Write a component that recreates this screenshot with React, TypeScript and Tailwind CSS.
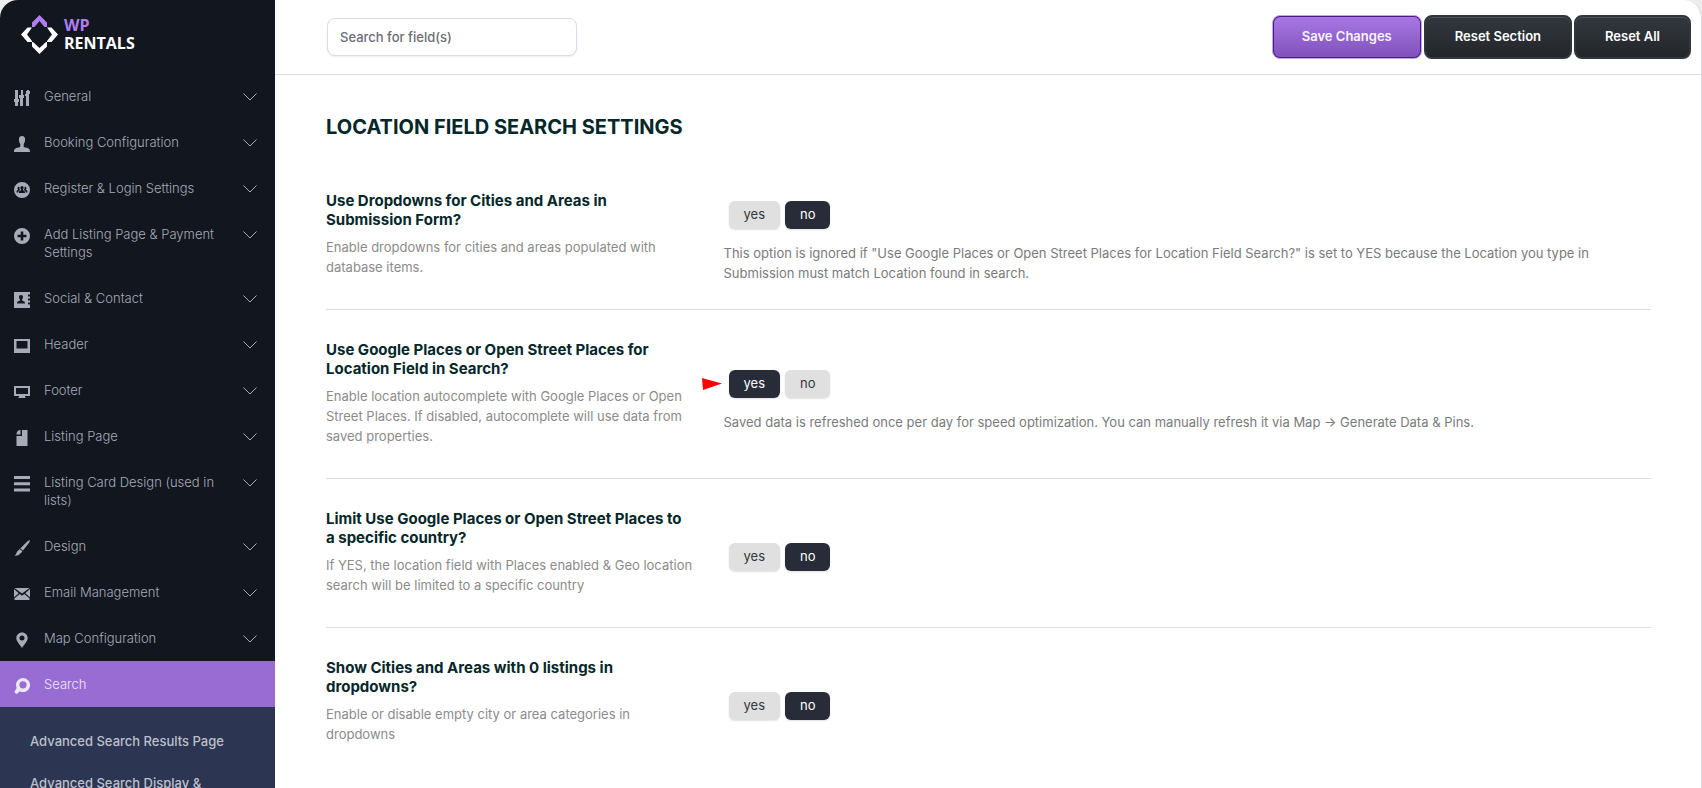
import { useState, type ReactNode } from "react"
import { clsx } from "clsx"

type MenuItem = {
  label: string
  icon: ReactNode
  active?: boolean
}

type Setting = {
  id: string
  title: string
  description: string
  note?: string
  value: "yes" | "no"
  marked?: boolean
}

const MENU: MenuItem[] = [
  {
    label: "General",
    icon: (
      <path d="M1 0h3v9h1v3H4v4H1v-4H0V9h1zM7 0h2v5h1v3h1V4h1V1h1V0h2v1h1v3h-1v12h-3V6h-1v2H9v8H6V8H5V5h2z" />
    ),
  },
  {
    label: "Booking Configuration",
    icon: (
      <path d="M8 0c2.200 0 3.100 1.300 3.100 3.600 0 1.900-.5 3.400-1.400 4.300v2c0 1 .6 1.300 2.100 1.700 2.700.7 4.200 1.300 4.200 4.400H0c0-3.100 1.500-3.700 4.200-4.400 1.500-.4 2.100-.7 2.100-1.700v-2c-.9-.9-1.400-2.400-1.400-4.300C4.900 1.300 5.800 0 8 0z" />
    ),
  },
  {
    label: "Register & Login Settings",
    icon: (
      <path
        fillRule="evenodd"
        d="M8 0a8 8 0 1 1 0 16A8 8 0 0 1 8 0zM8 4c-1.100 0-1.700.8-1.600 1.900 0 .7.3 1.200.7 1.600v.7C5.500 8.700 5 9 5 11h6c0-2-.5-2.300-2.100-2.800v-.7c.4-.4.7-.9.7-1.600C9.700 4.800 9.100 4 8 4zM4.800 4.800c-.9 0-1.300.6-1.300 1.400 0 .6.200 1 .5 1.300v.6C2.800 8.500 2.500 9 2.500 10.400h1.800c.1-1.200.6-1.900 1.700-2.400-.4-.7-.6-1.400-.5-2.900zM11.200 4.800l-.7.3c.1 1.500-.1 2.200-.5 2.900 1.100.5 1.600 1.200 1.700 2.400h1.800c0-1.400-.3-1.900-1.500-2.300v-.6c.3-.3.500-.7.500-1.300 0-.8-.4-1.400-1.300-1.400z"
      />
    ),
  },
  {
    label: "Add Listing Page & Payment Settings",
    icon: (
      <path
        fillRule="evenodd"
        d="M8 0a8 8 0 1 1 0 16A8 8 0 0 1 8 0zM6.700 3.500v3.200H3.500v2.600h3.200v3.200h2.600V9.300h3.200V6.700H9.300V3.500z"
      />
    ),
  },
  {
    label: "Social & Contact",
    icon: (
      <path
        fillRule="evenodd"
        d="M0 0h16v2.500h-2v2h2v2h-2v2h2v2h-2v2h2V16H0zM7 3C5.700 3 5 3.900 5 5.200c0 1 .4 1.800 1 2.400v.9C4 9.200 3 9.500 3 11.500h8c0-2-1-2.300-3-3v-.9c.6-.6 1-1.400 1-2.400C9 3.900 8.300 3 7 3z"
      />
    ),
  },
  {
    label: "Header",
    icon: <path fillRule="evenodd" d="M0 1h16v14H0zM2.500 3v7.500h11V3z" />,
  },
  {
    label: "Footer",
    icon: <path fillRule="evenodd" d="M0 2h16v10h-5v1l1 1H4l1-1v-1H0zM2 4v6h12V4z" />,
  },
  {
    label: "Listing Page",
    icon: <path d="M8 0h5.500v16h-11V6H8zM6.500 0v4.500h-4c0-2.500 1.500-4.500 4-4.500z" />,
  },
  {
    label: "Listing Card Design (used in lists)",
    icon: <path d="M0 0h16v3H0zM0 6.300h16v3H0zM0 12.500h16v3H0z" />,
  },
  {
    label: "Design",
    icon: (
      <path d="M15.700.3c.6.5-.4 2-1.400 3.400L9 10.500 6.300 8.400l6-6C13.600 1.100 15 0 15.700.3zM5.600 9l2.800 2.200c-.5 1.300-1.700 1.600-2.400 2.600C5 15.300 3 16 .5 15.700c1.500-.7 1.500-2.100 2.400-3.700C3.600 10.700 4.600 10.500 5.600 9z" />
    ),
  },
  {
    label: "Email Management",
    icon: (
      <path d="M.5 2h15L8 7.500zM0 3l4.700 4.200L0 11.200zM16 3v8.200l-4.700-4zM5.700 8 8 9.700 10.300 8l5.200 4.200V14H.5v-1.800z" />
    ),
  },
  {
    label: "Map Configuration",
    icon: (
      <path
        fillRule="evenodd"
        d="M8 .5c3.300 0 5.700 2.500 5.700 5.600C13.700 9.500 10.500 12 8 16 5.500 12 2.300 9.500 2.300 6.100 2.300 3 4.700.5 8 .5zM8 3.600a2.500 2.500 0 1 0 0 5 2.500 2.500 0 0 0 0-5z"
      />
    ),
  },
  {
    label: "Search",
    active: true,
    icon: (
      <path
        fillRule="evenodd"
        d="M9 0a7 7 0 1 1-3.200 13.200L4 15c-.6.600-1.300 1.200-2.300.6C.6 15 .1 14 .8 13.200L2.700 10A7 7 0 0 1 9 0zM9 3.200a3.600 3.600 0 1 0 0 7.200 3.600 3.600 0 0 0 0-7.200z"
      />
    ),
  },
]

const SUBMENU = ["Advanced Search Results Page", "Advanced Search Display &"]

const SETTINGS: Setting[] = [
  {
    id: "dropdowns",
    title: "Use Dropdowns for Cities and Areas in Submission Form?",
    description: "Enable dropdowns for cities and areas populated with database items.",
    note: 'This option is ignored if "Use Google Places or Open Street Places for Location Field Search?" is set to YES because the Location you type in Submission must match Location found in search.',
    value: "no",
  },
  {
    id: "places",
    title: "Use Google Places or Open Street Places for Location Field in Search?",
    description:
      "Enable location autocomplete with Google Places or Open Street Places. If disabled, autocomplete will use data from saved properties.",
    note: "Saved data is refreshed once per day for speed optimization. You can manually refresh it via Map → Generate Data & Pins.",
    value: "yes",
    marked: true,
  },
  {
    id: "limit-country",
    title: "Limit Use Google Places or Open Street Places to a specific country?",
    description:
      "If YES, the location field with Places enabled & Geo location search will be limited to a specific country",
    value: "no",
  },
  {
    id: "empty-areas",
    title: "Show Cities and Areas with 0 listings in dropdowns?",
    description: "Enable or disable empty city or area categories in dropdowns",
    value: "no",
  },
]

function Logo() {
  return (
    <a href="#" className="flex items-center gap-[6px] pt-[15px] pl-[21px]">
      <svg viewBox="0 0 37 39" className="h-[39px] w-[37px]" aria-hidden="true">
        <path fill="#b07df5" d="M18.500 0 26 7.500V12h-2.500l-5-6-5 6H11V7.500z" />
        <path fill="#fff" d="M11 12.500 6 19.500l5 6.500v1H6.500L0 19.500l6.500-7z" />
        <path fill="#fff" d="M26 12.500 31 19.500 26 26v1h4.500l6.500-7.500-6.500-7z" />
        <path fill="#fff" d="M18.500 39 26 31.500V27h-1l-6.500 6-6.500-6h-1v4.500z" />
      </svg>
      <span className="pb-px font-['Open_Sans',sans-serif] text-[16px] leading-[18px] font-bold text-white">
        <span className="block text-[#b07df5]">WP</span>
        <span className="block">RENTALS</span>
      </span>
    </a>
  )
}

function Sidebar() {
  return (
    <aside className="w-[275px] shrink-0 overflow-hidden bg-[#12161f]">
      <Logo />
      <nav className="mt-[19px]">
        {MENU.map((item) => (
          <a
            key={item.label}
            href="#"
            className={clsx(
              "flex items-start py-[14px] pr-[18px] pl-[14px] text-[13px] leading-[18px]",
              item.active ? "bg-[#996cd4] text-[#ece8f2]" : "text-[#a7abb8]"
            )}
          >
            <svg viewBox="0 0 16 16" className="mt-[3px] -mb-1 size-4 shrink-0 fill-current" aria-hidden="true">
              {item.icon}
            </svg>
            <span className="ml-[14px] w-[176px] font-light">{item.label}</span>
            {!item.active && (
              <svg
                viewBox="0 0 14 8"
                className="mt-[6px] ml-auto h-2 w-[14px] fill-none stroke-current"
                aria-hidden="true"
              >
                <path d="M.5.500 7 7 13.500.5" />
              </svg>
            )}
          </a>
        ))}
        <div className="bg-[#2c3552] pt-[13px] pb-4">
          {SUBMENU.map((label) => (
            <a
              key={label}
              href="#"
              className="block py-3 pr-10 pl-[30px] text-[13px] leading-[18px] font-medium text-[#bcc0cc]"
            >
              {label}
            </a>
          ))}
        </div>
      </nav>
    </aside>
  )
}

function Toolbar() {
  const dark =
    "h-11 rounded-lg border-2 border-[#2f373c] bg-linear-to-b from-[#32373e] to-[#23272b] px-[29px] text-[13px] font-semibold text-white shadow-[inset_0_1px_0_#4a5357]"

  return (
    <header className="flex h-[75px] items-center justify-between border-b border-[#dcdde0] pr-[10px] pl-[52px]">
      <input
        type="search"
        aria-label="Search for field(s)"
        placeholder="Search for field(s)"
        className="h-[38px] w-[250px] rounded-lg border border-[#dcdce4] bg-white px-3 text-[13px] font-medium shadow-[0_1px_2px_rgba(0,0,0,0.08)] outline-none placeholder:text-[#6b6d72]"
      />
      <div className="flex gap-[2px] pb-px">
        <button className="h-11 rounded-lg border border-[#c3a3ec] bg-[#4b1a8c] p-px text-[13px] font-semibold text-[#f8f3fe]">
          <span className="flex h-full items-center rounded-md bg-linear-to-b from-[#a877e4] to-[#8052ba] px-7">
            Save Changes
          </span>
        </button>
        <button className={dark}>Reset Section</button>
        <button className={dark}>Reset All</button>
      </div>
    </header>
  )
}

function Toggle({ setting }: { setting: Setting }) {
  const [value, setValue] = useState(setting.value)

  return (
    <div
      role="radiogroup"
      aria-labelledby={setting.id}
      className="relative flex gap-[5px] pt-[14px] pb-[6px] pl-[5px]"
    >
      {setting.marked && (
        <svg
          viewBox="0 0 20 12"
          className="absolute top-[22px] -left-[22px] h-3 w-5 fill-[#ff0000]"
          aria-hidden="true"
        >
          <path d="M0 0 20 5.500 1 12z" />
        </svg>
      )}
      {(["yes", "no"] as const).map((option) => (
        <label
          key={option}
          className={clsx(
            "flex h-7 cursor-pointer items-center rounded-md px-[15px] pb-px text-[13px] shadow-[0_1px_2px_rgba(0,0,0,0.12)]",
            value === option ? "bg-[#282c38] text-white" : "bg-[#e0e0e1] text-[#32373c]"
          )}
        >
          <input
            type="radio"
            name={setting.id}
            value={option}
            checked={value === option}
            onChange={() => setValue(option)}
            className="sr-only"
          />
          {option}
        </label>
      ))}
    </div>
  )
}

function SettingRow({ setting }: { setting: Setting }) {
  return (
    <section className="flex items-center border-b border-[#dcdde0] last:border-b-0">
      <div className="w-[30%] shrink-0 pt-[30px] pr-[30px] pb-8">
        <h3 id={setting.id} className="text-[15px] leading-[19px] font-bold text-[#04272a]">
          {setting.title}
        </h3>
        <p className="mt-2 text-[13px] leading-[20px] text-[#8b8b8b]">{setting.description}</p>
      </div>
      <div className="min-w-0 flex-1">
        <Toggle setting={setting} />
        {setting.note && (
          <p className="mt-2 text-[13px] leading-[20px] text-[#797b7c]">{setting.note}</p>
        )}
      </div>
    </section>
  )
}

export default function App() {
  return (
    <div className="h-screen overflow-hidden bg-[#ededee] font-['Inter',sans-serif]">
      <div className="flex h-full overflow-hidden rounded-t-[18px] border-r border-[#d9d9de] bg-white">
        <Sidebar />
        <main className="min-w-0 flex-1">
          <Toolbar />
          <div className="pr-[50px] pl-[51px]">
            <h2 className="pt-[38px] pb-[20px] text-[20px] leading-[28px] font-bold text-[#04272a]">
              LOCATION FIELD SEARCH SETTINGS
            </h2>
            {SETTINGS.map((setting) => (
              <SettingRow key={setting.id} setting={setting} />
            ))}
          </div>
        </main>
      </div>
    </div>
  )
}
